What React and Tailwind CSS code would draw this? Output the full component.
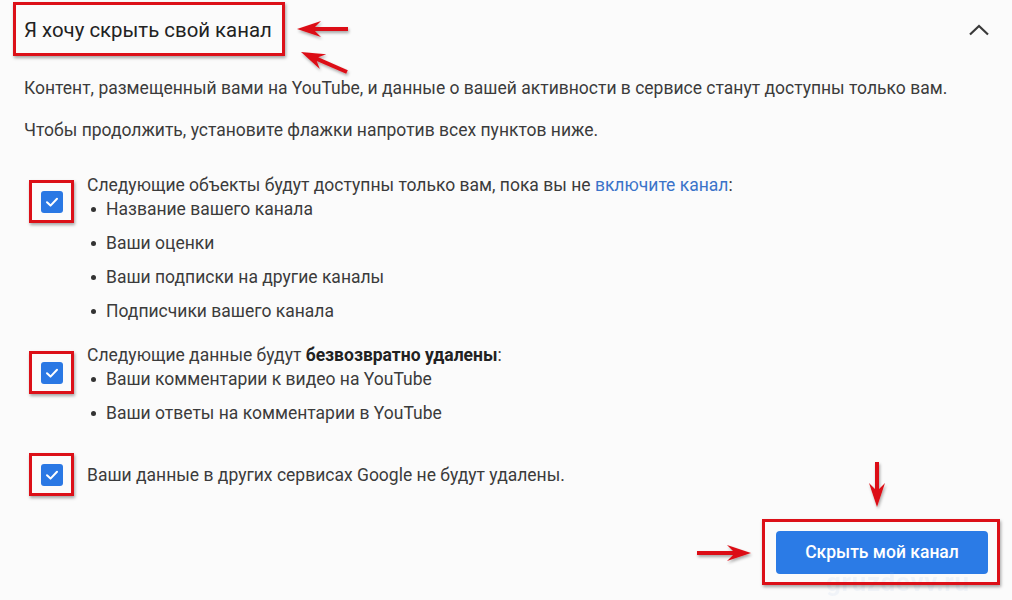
import React from "react";

const RED = "#dc1018";

function arrowPath(x1, y1, x2, y2, headLen = 24, headW = 8) {
  const dx = x2 - x1;
  const dy = y2 - y1;
  const len = Math.hypot(dx, dy);
  const ux = dx / len;
  const uy = dy / len;
  const px = -uy;
  const py = ux;
  const bx = x2 - ux * headLen;
  const by = y2 - uy * headLen;
  const nx = x2 - ux * (headLen - 6);
  const ny = y2 - uy * (headLen - 6);
  const sw = 2;
  const pts = [
    [x1 + px * sw, y1 + py * sw],
    [nx + px * sw, ny + py * sw],
    [bx + px * headW, by + py * headW],
    [x2, y2],
    [bx - px * headW, by - py * headW],
    [nx - px * sw, ny - py * sw],
    [x1 - px * sw, y1 - py * sw],
  ];
  return "M" + pts.map((p) => p[0].toFixed(1) + " " + p[1].toFixed(1)).join(" L") + " Z";
}

function Arrows() {
  const arrows = [
    [348, 29, 297, 29],
    [347, 72, 301, 52],
    [877, 462, 877, 507],
    [697, 553, 751, 553],
  ];
  return (
    <svg
      className="pointer-events-none absolute left-0 top-0"
      width="1012"
      height="600"
      viewBox="0 0 1012 600"
    >
      <defs>
        <filter id="sh" x="-20%" y="-20%" width="140%" height="140%">
          <feDropShadow dx="1" dy="2" stdDeviation="1.5" floodColor="#000" floodOpacity="0.35" />
        </filter>
      </defs>
      {arrows.map((a, i) => (
        <path key={i} d={arrowPath(...a)} fill={RED} filter="url(#sh)" />
      ))}
    </svg>
  );
}

function Check() {
  return (
    <div className="flex h-[22px] w-[22px] items-center justify-center rounded-[3px] bg-[#2a78e4]">
      <svg width="16" height="16" viewBox="0 0 16 16">
        <path d="M3 8.3 L6.5 11.6 L13 4.8" fill="none" stroke="#fff" strokeWidth="2" strokeLinecap="round" strokeLinejoin="round" />
      </svg>
    </div>
  );
}

function RedBox({ className }) {
  return (
    <div
      className={
        "pointer-events-none absolute border-[3px] border-[#dc1018] shadow-[1px_2px_3px_rgba(0,0,0,0.35)] " +
        className
      }
    />
  );
}

function Bullet({ children, first }) {
  return (
    <li className={"flex h-6 items-center " + (first ? "" : "mt-[10px]")}>
      <span className="ml-[4px] mr-[10px] h-[5px] w-[5px] rounded-full bg-[#333]" />
      <span>{children}</span>
    </li>
  );
}

export default function App() {
  return (
    <div
      className="relative h-[600px] w-[1012px] overflow-hidden bg-[#fbfbfb] text-[17.5px] text-[#3b3b3b]"
      style={{ fontFamily: "Roboto, 'Noto Sans', sans-serif" }}
    >
      <div className="flex h-[60px] items-center justify-between pl-6 pr-[22px]">
        <div className="relative">
          <span className="text-[20.4px] text-[#222]">Я хочу скрыть свой канал</span>
          <RedBox className="-left-[11px] -right-[13px] -top-[13px] -bottom-[11px]" />
        </div>
        <svg width="22" height="12" viewBox="0 0 22 12">
          <path d="M2 10.5 L11 2 L20 10.5" fill="none" stroke="#3a3a3a" strokeWidth="2.2" />
        </svg>
      </div>

      <div className="px-6">
        <p className="mt-4 leading-6">
          Контент, размещенный вами на YouTube, и данные о вашей активности в сервисе станут доступны только вам.
        </p>
        <p className="mt-[18px] leading-6">Чтобы продолжить, установите флажки напротив всех пунктов ниже.</p>

        <div className="mt-[31px] flex">
          <div className="relative ml-[17px] mt-[18px] h-[22px] w-[22px] shrink-0">
            <Check />
            <RedBox className="-left-[12px] -right-[11px] -top-[11px] -bottom-[10px]" />
          </div>
          <div className="ml-[24px] leading-6">
            <div>
              Следующие объекты будут доступны только вам, пока вы не{" "}
              <span className="text-[#3a73c9]">включите канал</span>:
            </div>
            <ul>
              <Bullet first>Название вашего канала</Bullet>
              <Bullet>Ваши оценки</Bullet>
              <Bullet>Ваши подписки на другие каналы</Bullet>
              <Bullet>Подписчики вашего канала</Bullet>
            </ul>
          </div>
        </div>

        <div className="mt-5 flex">
          <div className="relative ml-[17px] mt-[19px] h-[22px] w-[22px] shrink-0">
            <Check />
            <RedBox className="-left-[12px] -right-[11px] -top-[11px] -bottom-[10px]" />
          </div>
          <div className="ml-[24px] leading-6">
            <div>
              Следующие данные будут <b className="font-bold text-[#222]">безвозвратно удалены</b>:
            </div>
            <ul>
              <Bullet first>Ваши комментарии к видео на YouTube</Bullet>
              <Bullet>Ваши ответы на комментарии в YouTube</Bullet>
            </ul>
          </div>
        </div>

        <div className="mt-[38px] flex items-center">
          <div className="relative ml-[17px] h-[22px] w-[22px] shrink-0">
            <Check />
            <RedBox className="-left-[12px] -right-[11px] -top-[11px] -bottom-[10px]" />
          </div>
          <div className="ml-[24px] leading-6">Ваши данные в других сервисах Google не будут удалены.</div>
        </div>

        <div className="mt-[44px] flex justify-end">
          <div className="relative">
            <button className="h-[43px] w-[212px] rounded-[4px] bg-[#2b7be6] text-[17.5px] font-medium text-white">
              Скрыть мой канал
            </button>
            <span className="pointer-events-none absolute left-[50px] top-[32px] text-[26px] font-bold tracking-wide text-[#9bb7df] opacity-10">
              gruzdevv.ru
            </span>
            <RedBox className="-left-[14px] -right-[12px] -top-[12px] -bottom-[11px]" />
          </div>
        </div>
      </div>

      <Arrows />
    </div>
  );
}
